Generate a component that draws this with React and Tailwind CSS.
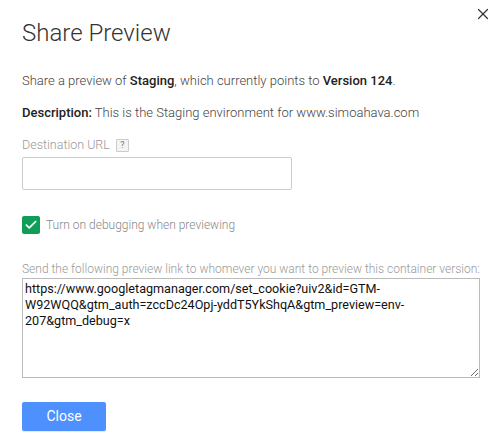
import { X, Check } from 'lucide-react';

const URL_TEXT =
  'https://www.googletagmanager.com/set_cookie?uiv2&id=GTM-W92WQQ&gtm_auth=zccDc24Opj-yddT5YkShqA&gtm_preview=env-207&gtm_debug=x';

export default function App() {
  return (
    <div className="relative w-[503px] h-[448px] bg-white text-[#444] font-['Roboto',sans-serif]">
      {/* close */}
      <button className="absolute right-[11px] top-[5px] w-[18px] h-[18px] flex items-center justify-center text-[#333]">
        <X size={18} strokeWidth={1.6} />
      </button>

      <div className="px-[22px] pt-[18px]">
        <h1 className="text-[24px] font-light leading-[30px] text-[#333]">Share Preview</h1>

        <p className="mt-[25px] text-[13px] font-light leading-[16px] text-[#444]">
          Share a preview of <b className="font-medium text-[#222]">Staging</b>, which currently points to{' '}
          <b className="font-medium text-[#222]">Version 124</b>.
        </p>

        <p className="mt-[16px] text-[13px] font-light leading-[16px] text-[#444]">
          <b className="font-medium text-[#222]">Description:</b> This is the Staging environment for www.simoahava.com
        </p>

        <div className="mt-[16px] flex items-center gap-[6px] text-[12.5px] font-light leading-[16px] text-[#999]">
          <span>Destination URL</span>
          <span className="w-[13px] h-[13px] border border-[#ccc] bg-[#f4f4f4] rounded-[1px] text-[9px] font-normal leading-[11px] text-[#777] flex items-center justify-center">?</span>
        </div>

        <input
          type="text"
          className="mt-[4px] block w-[270px] h-[33px] border border-[#ccc] rounded-[2px] outline-none px-2 text-[13px]"
        />

        <label className="mt-[26px] flex items-center gap-[6px] text-[12px] font-light leading-[16px] text-[#888]">
          <span className="w-[18px] h-[18px] rounded-[2px] bg-[#0f9d58] flex items-center justify-center">
            <Check size={14} strokeWidth={3} className="text-white" />
          </span>
          <span>Turn on debugging when previewing</span>
        </label>

        <p className="mt-[27px] text-[12px] font-light leading-[16px] text-[#999] whitespace-nowrap">
          Send the following preview link to whomever you want to preview this container version:
        </p>

        <textarea
          readOnly
          value={URL_TEXT}
          className="mt-[1px] block w-[458px] h-[100px] border border-[#bbb] px-[2px] py-[2px] text-[12.6px] leading-[16px] text-[#111] font-['Roboto',sans-serif] outline-none resize"
        />

        <button className="mt-[24px] w-[84px] h-[29px] rounded-[2px] bg-[#4d90fe] text-white text-[14px] shadow-[0_1px_1px_rgba(0,0,0,0.1)]">
          Close
        </button>
      </div>
    </div>
  );
}
